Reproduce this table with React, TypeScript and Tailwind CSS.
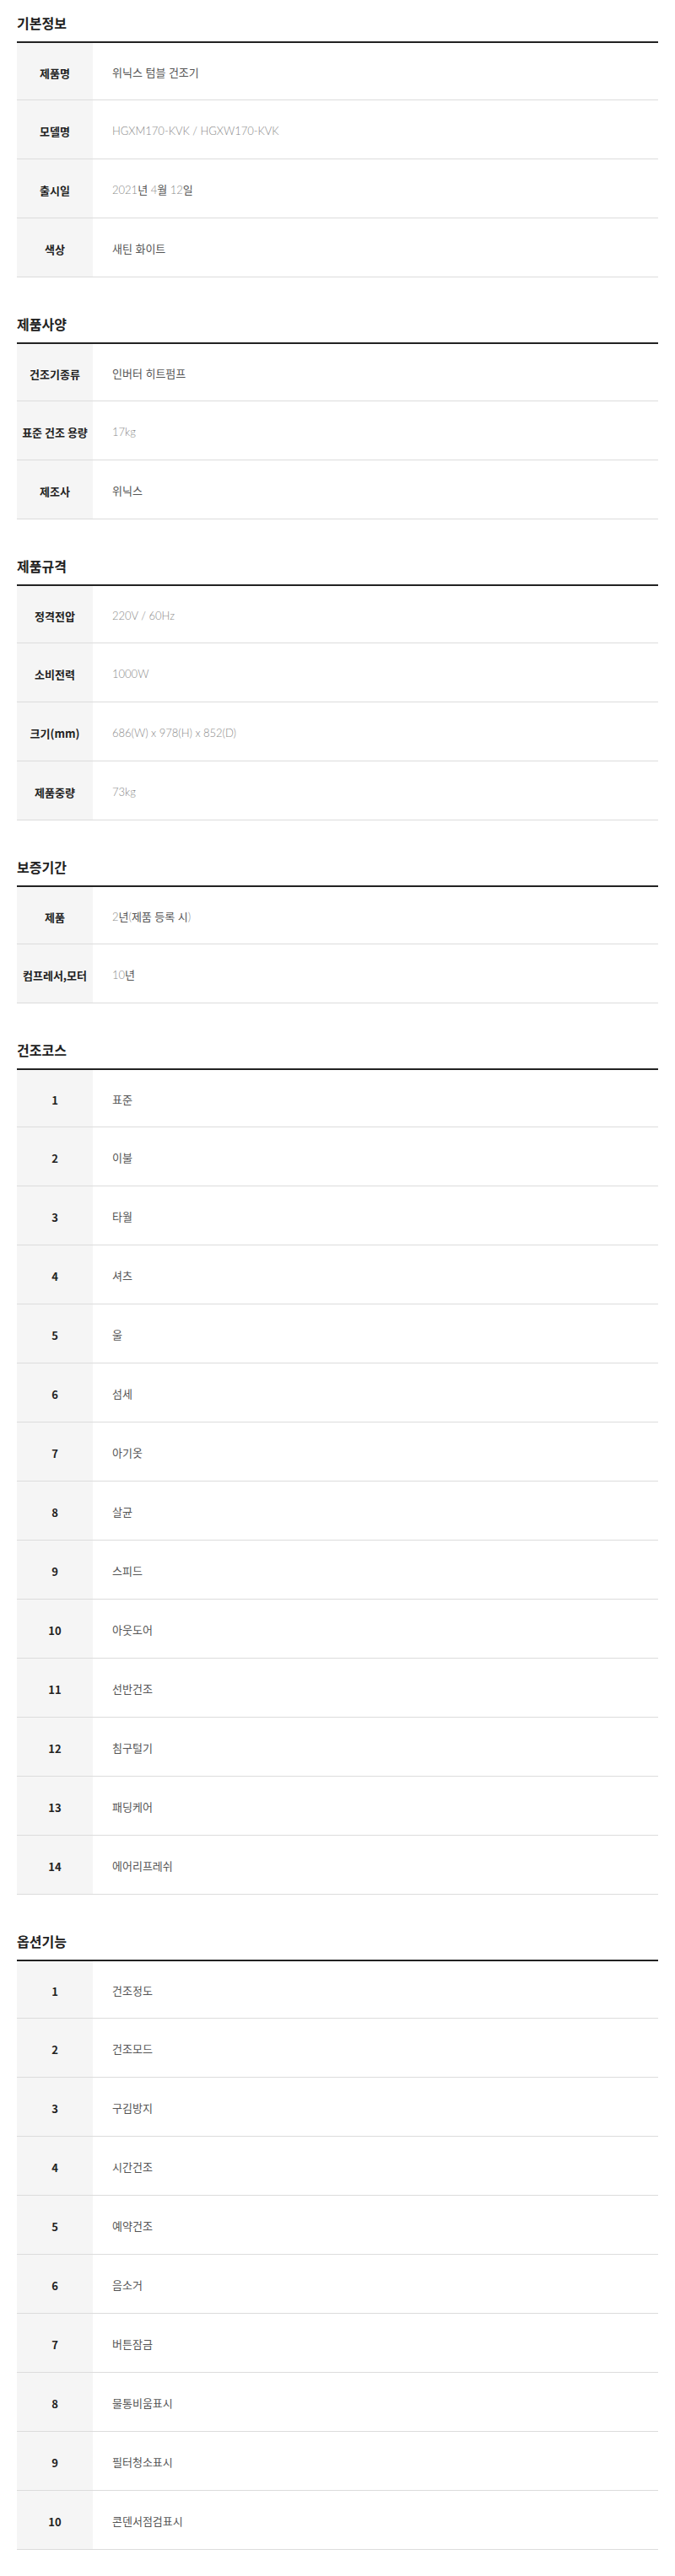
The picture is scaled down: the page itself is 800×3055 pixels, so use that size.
import React from "react";

type Row = [string, string];

const sections: { title: string; rows: Row[] }[] = [
  {
    title: "기본정보",
    rows: [
      ["제품명", "위닉스 텀블 건조기"],
      ["모델명", "HGXM170-KVK / HGXW170-KVK"],
      ["출시일", "2021년 4월 12일"],
      ["색상", "새틴 화이트"],
    ],
  },
  {
    title: "제품사양",
    rows: [
      ["건조기종류", "인버터 히트펌프"],
      ["표준 건조 용량", "17kg"],
      ["제조사", "위닉스"],
    ],
  },
  {
    title: "제품규격",
    rows: [
      ["정격전압", "220V / 60Hz"],
      ["소비전력", "1000W"],
      ["크기(mm)", "686(W) x 978(H) x 852(D)"],
      ["제품중량", "73kg"],
    ],
  },
  {
    title: "보증기간",
    rows: [
      ["제품", "2년(제품 등록 시)"],
      ["컴프레서,모터", "10년"],
    ],
  },
  {
    title: "건조코스",
    rows: [
      "표준",
      "이불",
      "타월",
      "셔츠",
      "울",
      "섬세",
      "아기옷",
      "살균",
      "스피드",
      "아웃도어",
      "선반건조",
      "침구털기",
      "패딩케어",
      "에어리프레쉬",
    ].map((v, i) => [String(i + 1), v] as Row),
  },
  {
    title: "옵션기능",
    rows: [
      "건조정도",
      "건조모드",
      "구김방지",
      "시간건조",
      "예약건조",
      "음소거",
      "버튼잠금",
      "물통비움표시",
      "필터청소표시",
      "콘덴서점검표시",
    ].map((v, i) => [String(i + 1), v] as Row),
  },
];

function renderValue(v: string) {
  const parts = v.split(/([A-Za-z0-9()\/\-\s.]+)/).filter((p) => p !== "");
  return parts.map((p, i) =>
    /[가-힣]/.test(p) ? (
      <span key={i} className="text-[#555]">
        {p}
      </span>
    ) : (
      <span key={i} className="text-[#8a8a8a] font-light">
        {p}
      </span>
    )
  );
}

export default function App() {
  return (
    <div
      className="w-[800px] bg-white px-5 pb-[31px]"
      style={{ fontFamily: '"Noto Sans CJK KR", "Malgun Gothic", sans-serif' }}
    >
      {sections.map((s, si) => (
        <section key={s.title} className={si === 0 ? "" : "mt-[28px]"}>
          <div className="h-[49px] flex items-center">
            <h2 className="text-[16px] font-bold text-[#222] leading-none mt-[4px]">{s.title}</h2>
          </div>
          <div className="border-t-2 border-[#222]">
            {s.rows.map(([k, v], ri) => (
              <div
                key={k}
                className={`flex border-b border-[#dcdcdc] ${ri === 0 ? "h-[68px]" : "h-[70px]"}`}
              >
                <div className="w-[90px] shrink-0 bg-[#f5f5f5] flex items-center justify-center">
                  <span className="text-[13px] font-bold text-[#222] leading-none mt-[3px]">{k}</span>
                </div>
                <div className="flex items-center pl-[23px]">
                  <span
                    className="text-[13px] leading-none mt-[3px]"
                    style={{ fontFamily: 'Lato, "Noto Sans CJK KR", sans-serif' }}
                  >
                    {renderValue(v)}
                  </span>
                </div>
              </div>
            ))}
          </div>
        </section>
      ))}
    </div>
  );
}
